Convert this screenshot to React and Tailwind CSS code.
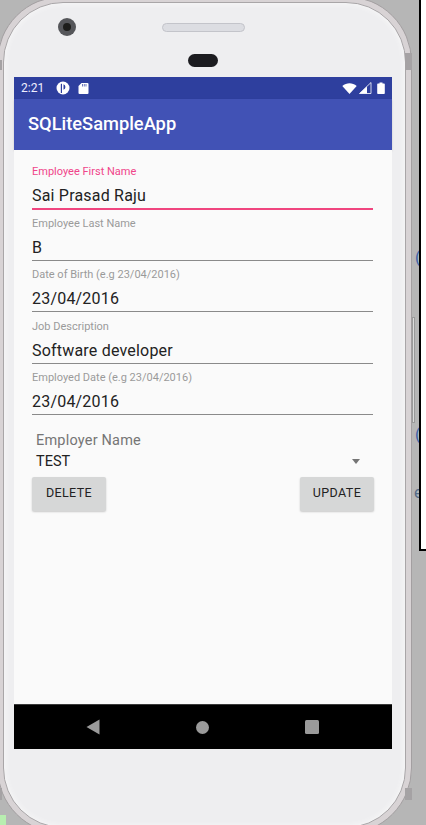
const fields = [
  { label: 'Employee First Name', value: 'Sai Prasad Raju', active: true },
  { label: 'Employee Last Name', value: 'B' },
  { label: 'Date of Birth (e.g 23/04/2016)', value: '23/04/2016' },
  { label: 'Job Description', value: 'Software developer' },
  { label: 'Employed Date (e.g 23/04/2016)', value: '23/04/2016' },
]

function Field({ label, value, active }) {
  return (
    <div className="h-[51.5px] flex flex-col">
      <span className={`text-[11px] leading-[14px] ${active ? 'text-[#f0458a]' : 'text-[#9a9a9a]'}`}>{label}</span>
      <span className="mt-[6px] text-[16px] leading-[22px] text-[#222] tracking-[0.2px]">{value}</span>
      <div className={`mt-[1px] ${active ? 'h-[2px] bg-[#f0457f]' : 'h-px bg-[#8a8a8a]'}`} />
    </div>
  )
}

function StatusBar() {
  return (
    <div className="h-[22px] bg-[#2e3f9e] flex items-center pl-[7px] pr-[7px] text-white">
      <span className="text-[12px] leading-none text-[#eef] w-[35px]">2:21</span>
      <svg width="14" height="14" viewBox="0 0 14 14">
        <circle cx="7" cy="7" r="6.5" fill="#fff" />
        <path d="M6 2.500v9.500H4.800V3.200zM7.500 3.200a3 3 0 0 1 0 5.600z" fill="#2e3f9e" />
      </svg>
      <svg width="11" height="12" viewBox="0 0 11 12" className="ml-[8px]">
        <path d="M3.500 1H9.500a1 1 0 0 1 1 1v9a1 1 0 0 1-1 1h-8a1 1 0 0 1-1-1V4z" fill="#fff" />
        <path d="M4.500 2v2.500M6.300 2v2.500M8 2v2.500" stroke="#2e3f9e" strokeWidth="0.7" />
      </svg>
      <div className="ml-auto flex items-center gap-[2px]">
        <svg width="15" height="11" viewBox="0 0 15 11">
          <path d="M0.300 3C4.500 -0.600 10.500 -0.600 14.700 3L7.500 11z" fill="#fff" />
        </svg>
        <svg width="13" height="12" viewBox="0 0 13 12">
          <path d="M12 0.500V11.500H0.500z" fill="none" stroke="#fff" strokeWidth="0.8" />
          <path d="M8 4.500L0.500 11.500H8z" fill="#fff" />
        </svg>
        <svg width="8" height="12" viewBox="0 0 8 12" className="ml-[3px]">
          <path d="M2.500 0.500h3v1H7a.8.8 0 0 1 .8.8v8.900a.8.8 0 0 1-.8.8H1a.8.8 0 0 1-.8-.8V2.300a.8.8 0 0 1 .8-.8h1.500z" fill="#fff" />
        </svg>
      </div>
    </div>
  )
}

function NavBar() {
  return (
    <div className="h-[45px] bg-black border-t border-[#3a3a3a] flex items-center justify-between pl-[72px] pr-[73px]">
      <svg width="14" height="16" viewBox="0 0 14 16"><path d="M13.500 0.500V15.500L0.500 8z" fill="#9a9a9a" /></svg>
      <div className="w-[13px] h-[13px] rounded-full bg-[#9a9a9a]" />
      <div className="w-[14px] h-[14px] rounded-[1.500px] bg-[#9a9a9a]" />
    </div>
  )
}

export default function App() {
  return (
    <div className="relative w-[426px] h-[825px] overflow-hidden bg-[#b6b6b6] font-['Roboto','Liberation_Sans',sans-serif]">
      {/* window behind the emulator */}
      <span className="absolute left-[415px] top-[248px] text-[16px] leading-[20px] text-[#3d62a8]">(</span>
      <span className="absolute left-[415px] top-[425px] text-[16px] leading-[20px] text-[#3d62a8]">(</span>
      <span className="absolute left-[414px] top-[483px] text-[16px] leading-[20px] text-[#556b88]">e</span>
      <div className="absolute left-[419px] top-0 w-[7px] h-[551px] bg-white border-l-2 border-b-2 border-black" />
      <div className="absolute left-0 top-[815px] w-[6px] h-[10px] bg-[#b8eeb0]" />

      {/* side button */}
      <div className="absolute left-[412px] top-[317px] w-[3px] h-[106px] bg-[#dcdcdc] border border-[#9a9a9a]" />

      {/* phone body */}
      <div className="relative -ml-[3px] -mt-[4px] w-[415px] h-[838px] rounded-[66px] bg-[#d8d3d5] border border-[#a39fa1] p-[5px]">
        <div className="h-full rounded-[60px] bg-[#eeeef0] border border-[#a9a6a8] pt-[74px] pl-[10px] pr-[10px] shadow-[inset_0_0_6px_#fafafa]">
          <div className="w-[378px] flex flex-col">
            <StatusBar />
            <div className="h-[51px] bg-[#4152b5] flex items-center pl-[14px] shadow-[0_1px_2px_rgba(0,0,0,0.15)]">
              <span className="text-[18.3px] font-medium text-white leading-none">SQLiteSampleApp</span>
            </div>
            <div className="h-[554px] bg-[#fafafa] pt-[15px] pl-[18px] pr-[19px] flex flex-col">
              {fields.map((f) => (
                <Field key={f.label} {...f} />
              ))}
              <div className="pl-[4px] mt-[8px] text-[14.500px] leading-[20px] text-[#757575] tracking-[0.2px]">Employer Name</div>
              <div className="mt-[1px] flex items-center justify-between pl-[4px] pr-[13px]">
                <span className="text-[14.500px] leading-[20px] text-[#222]">TEST</span>
                <div className="w-0 h-0 border-l-[4.500px] border-r-[4.500px] border-t-[5px] border-l-transparent border-r-transparent border-t-[#757575]" />
              </div>
              <div className="mt-[5px] -mr-px flex justify-between">
                <button type="button" className="w-[74px] h-[34px] rounded-[2px] bg-[#d6d7d7] shadow-[0_1px_2px_rgba(0,0,0,0.2)] text-[12.500px] text-[#222] tracking-[0.4px]">DELETE</button>
                <button type="button" className="w-[74px] h-[34px] rounded-[2px] bg-[#d6d7d7] shadow-[0_1px_2px_rgba(0,0,0,0.2)] text-[12.500px] text-[#222] tracking-[0.4px]">UPDATE</button>
              </div>
            </div>
            <NavBar />
          </div>
        </div>
      </div>

      {/* seams in the metal frame */}
      <div className="absolute left-[405px] top-[53px] w-[7px] h-[17px] bg-[#a5a2a4]" />
      <div className="absolute left-[405px] top-[788px] w-[7px] h-[12px] bg-[#a5a2a4]" />
      <div className="absolute left-0 top-[60px] w-[2px] h-[10px] bg-[#a5a2a4]" />
      <div className="absolute left-0 top-[788px] w-[2px] h-[12px] bg-[#a5a2a4]" />

      {/* camera, earpiece, sensor */}
      <div className="absolute left-[58px] top-[18px] w-[18px] h-[18px] rounded-full bg-[#55565a] flex items-center justify-center">
        <div className="w-[8px] h-[8px] rounded-full bg-[#1d1d1b]" />
      </div>
      <div className="absolute left-[162px] top-[23px] w-[83px] h-[9px] rounded-full bg-[#dcdde2] border border-[#c3c4ca]" />
      <div className="absolute left-[188px] top-[54px] w-[30px] h-[13px] rounded-full bg-[#1c1c20]" />
    </div>
  )
}
